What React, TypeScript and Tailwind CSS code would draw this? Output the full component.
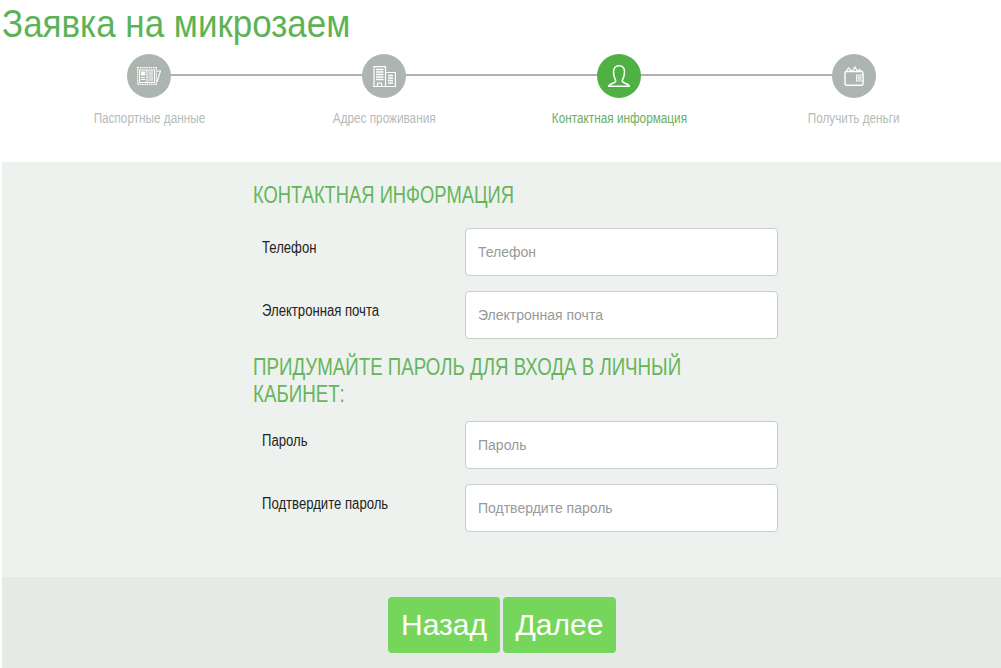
import type { ReactNode } from 'react';

const sans = "font-['Liberation_Sans',sans-serif]";

function PassportIcon() {
	return (
		<svg width="24" height="18" viewBox="0 0 24 18" fill="none" stroke="#fff" strokeWidth="1.1">
			<path d="M.6.6h18.800v16.800H.6z" strokeDasharray="1.500 0.700" />
			<path d="M2.500 3h15v12.500h-15z" />
			<path d="M10 3v12.500" />
			<rect x="3.800" y="4.500" width="4.500" height="4" fill="#fff" stroke="none" />
			<path d="M3.800 10.500h4.500M3.800 12.500h4.500M11.500 5h4.500M11.500 7h4.500M11.500 9h4.500M11.500 11h4.500M11.500 13h4.500" />
			<path d="M20 4h3.500L20 15" />
		</svg>
	);
}

function BuildingIcon() {
	return (
		<svg width="23" height="21" viewBox="0 0 23 21" fill="none" stroke="#fff" strokeWidth="1.2">
			<path d="M1 20.500V.6h11.500v19.900" />
			<path d="M12.500 6.500h9.900v14H0" />
			<path d="M3 3.500h7.500M3 6h7.500M3 8.500h7.500M3 11h7.500M3 13.500h7.500" strokeWidth="1.300" />
			<path d="M4.500 20.500v-3.500h4v3.500" />
			<path d="M15 9.500h5M15 12h5M15 14.500h5M15 17h5" strokeWidth="1.300" />
		</svg>
	);
}

function UserIcon() {
	return (
		<svg width="22" height="22" viewBox="0 0 22 22" fill="none" stroke="#fff" strokeWidth="1.500">
			<path d="M0 21.200h22M1 21c.4-1.800 3-2.600 5.500-3.500 1.400-.5 1.400-1.600.9-2.600C6.300 13 5.500 10 5.500 6.800 5.500 2.800 7.800.8 11 .8s5.500 2 5.500 6c0 3.200-.8 6.200-1.900 8.100-.5 1-.5 2.100.9 2.600 2.500.9 5.100 1.700 5.500 3.500" />
		</svg>
	);
}

function WalletIcon() {
	return (
		<svg width="20" height="20" viewBox="0 0 20 20" fill="none" stroke="#fff" strokeWidth="1.2">
			<rect x="1" y="5.500" width="18" height="13.800" rx="1.500" strokeWidth="1.400" />
			<path d="M2 5.500 4.500 2l3.500 3.500L11 1l2.500 4.500 2-2 1.500 2" />
			<rect x="12.500" y="9" width="6.500" height="6" fill="#c4cbc6" stroke="#fff" strokeWidth="0.800" />
			<circle cx="15.500" cy="12" r="1.400" strokeWidth="0.800" />
		</svg>
	);
}

function Step({ icon, label, active }: { icon: ReactNode; label: string; active?: boolean }) {
	return (
		<div className="relative flex w-[235px] flex-col items-center">
			<div
				className={`flex h-[44px] w-[44px] items-center justify-center rounded-full ${active ? 'bg-[#4fb044]' : 'bg-[#adb5b0]'}`}
			>
				{icon}
			</div>
			<div
				className={`mt-[12px] scale-x-[.84] whitespace-nowrap text-[14px] leading-[16px] ${active ? 'text-[#6bae62]' : 'text-[#b5bcb8]'}`}
			>
				{label}
			</div>
		</div>
	);
}

function Field({ label }: { label: string }) {
	return (
		<div className="flex">
			<label className="w-[203px] origin-left scale-x-[.82] pt-[10px] text-[16px] leading-[20px] whitespace-nowrap text-[#1e2421]">
				{label}
			</label>
			<input
				placeholder={label}
				className="h-[48px] w-[313px] rounded-[4px] border border-[#c9cdca] bg-white px-[12px] text-[14px] outline-none placeholder:text-[#999]"
			/>
		</div>
	);
}

export default function App() {
	return (
		<div className={`h-[668px] w-[1001px] overflow-hidden bg-white ${sans}`}>
			<h1 className="ml-[2px] origin-left scale-x-[.897] pt-[2px] text-[39px] leading-[44px] whitespace-nowrap text-[#5cb356]">
				Заявка на микрозаем
			</h1>

			<div className="relative ml-[31.5px] mt-[8px] flex h-[108px]">
				<div className="absolute left-[117px] top-[20px] h-[2px] w-[705px] bg-[#adb3af]" />
				<Step icon={<PassportIcon />} label="Паспортные данные" />
				<Step icon={<BuildingIcon />} label="Адрес проживания" />
				<Step icon={<UserIcon />} label="Контактная информация" active />
				<Step icon={<WalletIcon />} label="Получить деньги" />
			</div>

			<div className="ml-[2px] h-[415px] bg-[#eef2ef] pl-[260px] pt-[19px]">
				<h2 className="-ml-[9px] w-[600px] origin-left scale-x-[.765] text-[24px] leading-[27px] text-[#66b55c]">
					КОНТАКТНАЯ ИНФОРМАЦИЯ
				</h2>
				<div className="mt-[20px] flex flex-col gap-[15px]">
					<Field label="Телефон" />
					<Field label="Электронная почта" />
				</div>
				<h2 className="-ml-[9px] mt-[14px] w-[580px] origin-left scale-x-[.78] text-[24px] leading-[27px] text-[#66b55c]">
					ПРИДУМАЙТЕ ПАРОЛЬ ДЛЯ ВХОДА В ЛИЧНЫЙ КАБИНЕТ:
				</h2>
				<div className="mt-[14px] flex flex-col gap-[15px]">
					<Field label="Пароль" />
					<Field label="Подтвердите пароль" />
				</div>
			</div>

			<div className="ml-[2px] flex h-[91px] justify-center gap-[3px] bg-[#e5eae7] pl-[1px] pt-[20px]">
				<button className="h-[56px] w-[112px] rounded-[4px] bg-[#76d65b] pb-[2px] text-[30px] text-white">Назад</button>
				<button className="h-[56px] w-[113px] rounded-[4px] bg-[#76d65b] pb-[2px] text-[30px] text-white">Далее</button>
			</div>
		</div>
	);
}
